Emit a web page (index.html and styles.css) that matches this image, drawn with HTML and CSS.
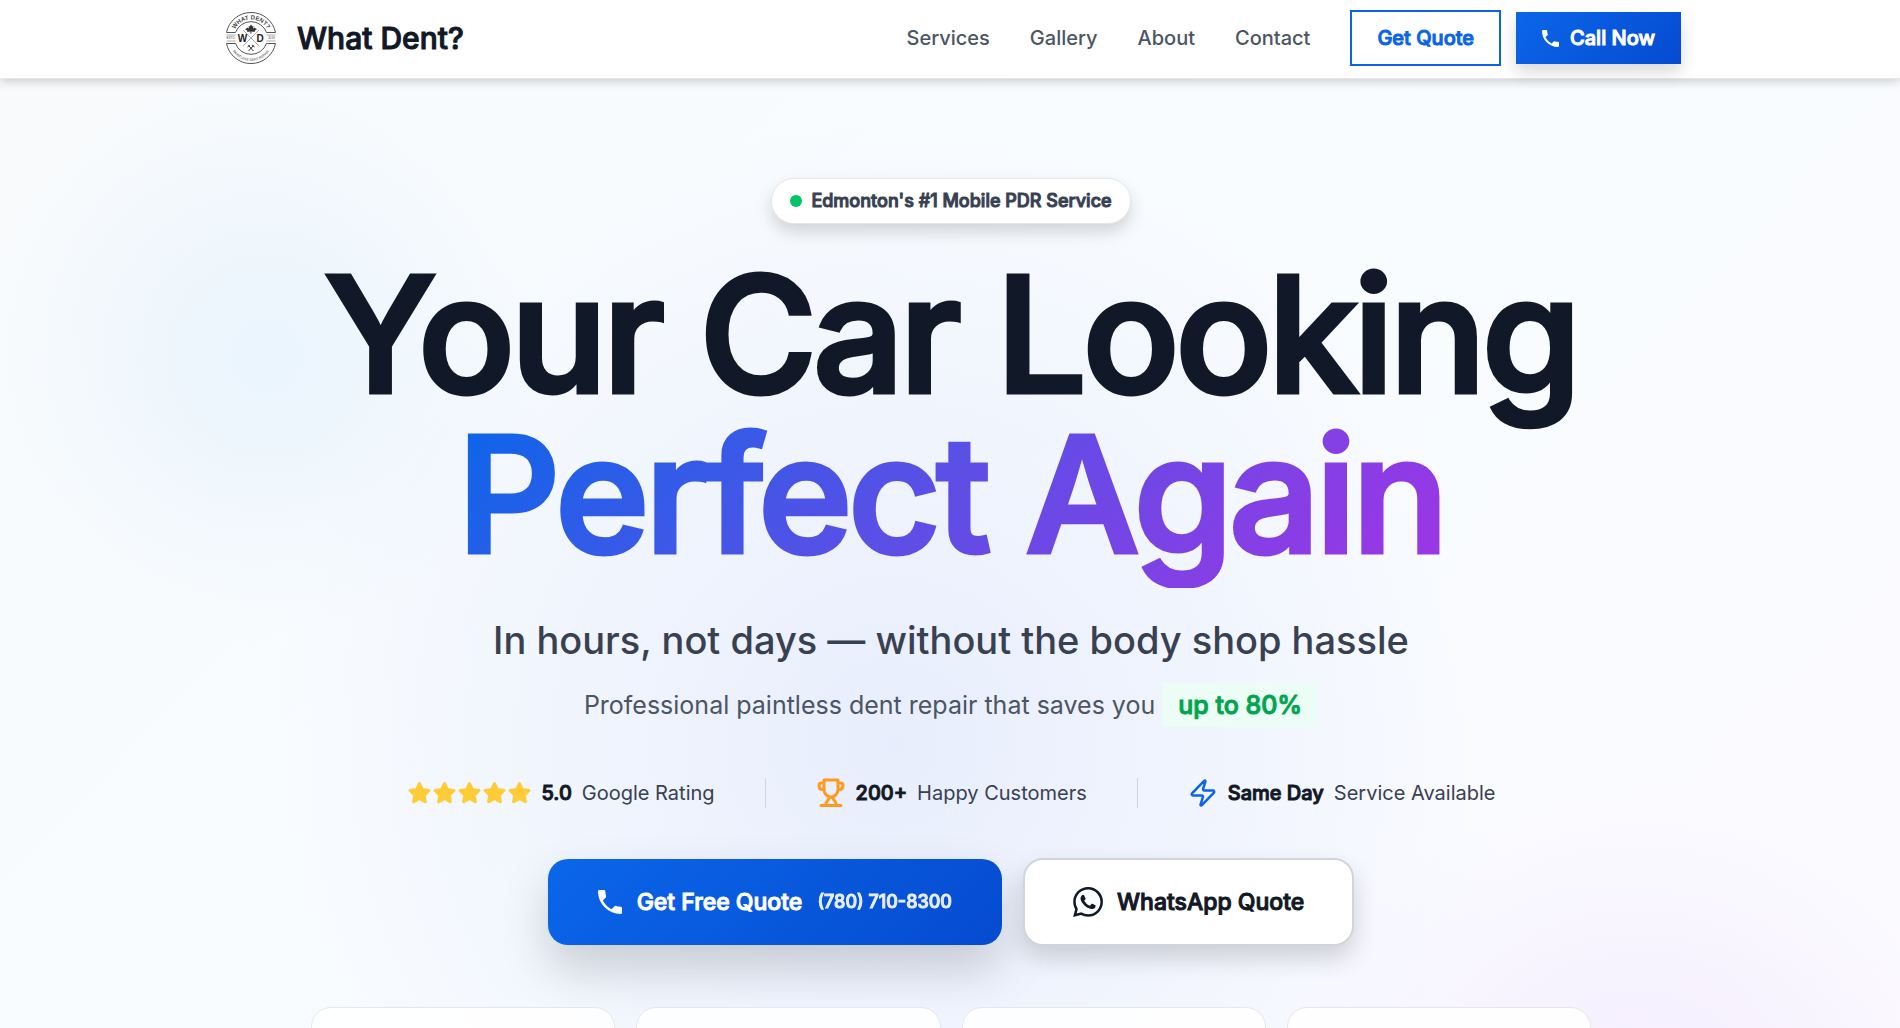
FILE: index.html
```html
<!DOCTYPE html>
<html lang="en">
  <head>
    <meta charset="UTF-8" />
    <meta name="viewport" content="width=device-width, initial-scale=1.0" />
    <title>What Dent? | Mobile PDR Edmonton</title>
    <link rel="stylesheet" href="styles.css">
  </head>
  <body>
    <header class="header">
      <div class="header-inner">
        <a href="#" class="brand">
          <svg class="logo" viewBox="0 0 104 104" aria-hidden="true">
            <defs>
              <path id="arcTop" d="M15 52a37 37 0 0 1 74 0" />
              <path id="arcBottom" d="M8 54a44 44 0 0 0 88 0" />
            </defs>
            <g fill="none" stroke="#555" stroke-width="2">
              <path d="M3 41a50 50 0 0 1 98 0H83a33 33 0 0 0-62 0z" />
              <path d="M3 63a50 50 0 0 0 98 0H83a33 33 0 0 1-62 0z" />
              <path d="M3 46h18M83 46h18M3 58h18M83 58h18" stroke-width="1" />
              <path d="M36 36l32 32M68 36L36 68" stroke-width="1" />
            </g>
            <path fill="#333" d="M52 25l3 4 2-1-1 5 4-2 1 2 3 1-5 4 1 2-7-1v4h-2v-4l-7 1 1-2-5-4 3-1 1-2 4 2-1-5 2 1z" />
            <path fill="none" stroke="#333" stroke-width="2" d="M47 67l10 11M57 67L47 78M45 70l5-4M54 66l5 4" />
            <text class="logo-top"><textPath href="#arcTop" startOffset="50%">WHAT DENT?</textPath></text>
            <text class="logo-bottom"><textPath href="#arcBottom" startOffset="50%">PAINTLESS DENT REPAIR</textPath></text>
            <text class="logo-letter" x="35" y="59">W</text>
            <text class="logo-letter" x="70" y="59">D</text>
            <text class="logo-small" x="12" y="54">ESTD.</text>
            <text class="logo-small" x="93" y="54">2018</text>
          </svg>
          <span class="brand-name">What Dent?</span>
        </a>
        <nav class="nav">
          <a href="#services" class="nav-link">Services</a>
          <a href="#gallery" class="nav-link">Gallery</a>
          <a href="#about" class="nav-link">About</a>
          <a href="#contact" class="nav-link">Contact</a>
          <div class="nav-actions">
            <a href="#quote" class="btn-outline">Get Quote</a>
            <a href="tel:7807108300" class="btn-call">
              <svg class="icon-phone" viewBox="3 3 18 18" aria-hidden="true"><path d="M20 15.5c-1.25 0-2.45-.2-3.57-.57a1 1 0 0 0-1.02.24l-2.2 2.2a15.05 15.05 0 0 1-6.59-6.58l2.2-2.21a1 1 0 0 0 .25-1.02A11.4 11.4 0 0 1 8.5 4a1 1 0 0 0-1-1H4a1 1 0 0 0-1 1 17 17 0 0 0 17 17 1 1 0 0 0 1-1v-3.500a1 1 0 0 0-1-1z" /></svg>
              Call Now
            </a>
          </div>
        </nav>
      </div>
    </header>

    <main class="hero">
      <div class="badge"><span class="badge-dot"></span>Edmonton's #1 Mobile PDR Service</div>

      <h1 class="title">Your Car Looking <span class="title-accent">Perfect Again</span></h1>

      <p class="lead">In hours, not days — without the body shop hassle</p>
      <p class="sublead">Professional paintless dent repair that saves you <span class="save">up to 80%</span></p>

      <div class="stats">
        <div class="stat">
          <div class="stars">
            <svg viewBox="0 0 24 24" aria-hidden="true"><path id="star" d="M12 2.500l2.700 5.800 6.300.8-4.600 4.400 1.200 6.300L12 16.700l-5.600 3.100 1.200-6.300L3 9.100l6.300-.8z" /></svg>
            <svg viewBox="0 0 24 24" aria-hidden="true"><use href="#star" /></svg>
            <svg viewBox="0 0 24 24" aria-hidden="true"><use href="#star" /></svg>
            <svg viewBox="0 0 24 24" aria-hidden="true"><use href="#star" /></svg>
            <svg viewBox="0 0 24 24" aria-hidden="true"><use href="#star" /></svg>
          </div>
          <strong>5.0</strong>
          <span>Google Rating</span>
        </div>
        <div class="divider"></div>
        <div class="stat">
          <svg class="stat-icon trophy" viewBox="0 0 30 30" aria-hidden="true">
            <path d="M8 2h14v9a7 8 0 0 1-14 0zM8 5H5.500C3.500 5 3 6 3 7.500c0 2.500 1.500 4 3.500 4H8M22 5h2.500C26.500 5 27 6 27 7.500c0 2.500-1.500 4-3.500 4H22M13.500 19C13.500 22 9.500 23 9.500 27M16.500 19C16.500 22 20.500 23 20.500 27M5 27.500h20" />
          </svg>
          <strong>200+</strong>
          <span>Happy Customers</span>
        </div>
        <div class="divider"></div>
        <div class="stat">
          <svg class="stat-icon bolt" viewBox="0 0 24 24" aria-hidden="true">
            <path d="M4 14a1 1 0 0 1-.78-1.630l9.900-10.200a.5.5 0 0 1 .860.460l-1.920 6.020A1 1 0 0 0 13 10h7a1 1 0 0 1 .780 1.630l-9.900 10.200a.5.5 0 0 1-.860-.460l1.920-6.020A1 1 0 0 0 11 14z" />
          </svg>
          <strong>Same Day</strong>
          <span>Service Available</span>
        </div>
      </div>

      <div class="cta">
        <a href="tel:7807108300" class="cta-primary">
          <svg class="icon-phone" viewBox="3 3 18 18" aria-hidden="true"><path d="M20 15.5c-1.25 0-2.45-.2-3.57-.57a1 1 0 0 0-1.02.24l-2.2 2.2a15.05 15.05 0 0 1-6.59-6.58l2.2-2.21a1 1 0 0 0 .25-1.02A11.4 11.4 0 0 1 8.5 4a1 1 0 0 0-1-1H4a1 1 0 0 0-1 1 17 17 0 0 0 17 17 1 1 0 0 0 1-1v-3.500a1 1 0 0 0-1-1z" /></svg>
          <span>Get Free Quote</span>
          <span class="cta-number">(780) 710-8300</span>
        </a>
        <a href="#whatsapp" class="cta-secondary">
          <svg class="icon-whatsapp" viewBox="0 0 24 24" aria-hidden="true"><path d="M17.472 14.382c-.297-.149-1.758-.867-2.030-.967-.273-.099-.471-.148-.670.150-.197.297-.767.966-.940 1.164-.173.199-.347.223-.644.075-.297-.150-1.255-.463-2.390-1.475-.883-.788-1.480-1.761-1.653-2.059-.173-.297-.018-.458.130-.606.134-.133.298-.347.446-.520.149-.174.198-.298.298-.497.099-.198.050-.371-.025-.520-.075-.149-.669-1.612-.916-2.207-.242-.579-.487-.500-.669-.510-.173-.008-.371-.010-.570-.010-.198 0-.520.074-.792.372-.272.297-1.040 1.016-1.040 2.479 0 1.462 1.065 2.875 1.213 3.074.149.198 2.096 3.200 5.077 4.487.709.306 1.262.489 1.694.625.712.227 1.360.195 1.871.118.571-.085 1.758-.719 2.006-1.413.248-.694.248-1.289.173-1.413-.074-.124-.272-.198-.570-.347m-5.421 7.403h-.004a9.870 9.870 0 0 1-5.031-1.378l-.361-.214-3.741.982.998-3.648-.235-.374a9.860 9.860 0 0 1-1.510-5.260c.001-5.450 4.436-9.884 9.888-9.884 2.640 0 5.122 1.030 6.988 2.898a9.825 9.825 0 0 1 2.893 6.994c-.003 5.450-4.437 9.884-9.885 9.884m8.413-18.297A11.815 11.815 0 0 0 12.050 0C5.495 0 .160 5.335.157 11.892c0 2.096.547 4.142 1.588 5.945L.057 24l6.305-1.654a11.882 11.882 0 0 0 5.683 1.448h.005c6.554 0 11.890-5.335 11.893-11.893a11.821 11.821 0 0 0-3.480-8.413z" /></svg>
          WhatsApp Quote
        </a>
      </div>

      <div class="cards">
        <div class="card"></div>
        <div class="card"></div>
        <div class="card"></div>
        <div class="card"></div>
      </div>
    </main>
  </body>
</html>
```

FILE: styles.css
```css
* {
  box-sizing: border-box;
}

body {
  margin: 0;
  font-family: Inter, "Liberation Sans", sans-serif;
  font-size: 20px;
  color: #111827;
  height: 100vh;
  overflow: hidden;
}

a {
  color: inherit;
  text-decoration: none;
}

/* heavier medium weight for buttons and highlights */
.brand-name,
.btn-outline,
.btn-call,
.badge,
.save,
.stat strong,
.cta-primary,
.cta-secondary {
  font-weight: 500;
  -webkit-text-stroke: 1px currentColor;
}

/* header */
.header {
  position: relative;
  background: #fff;
  border-bottom: 1px solid #e5e7eb;
  box-shadow: 0 2px 10px rgba(0, 0, 0, 0.2);
}

.header-inner {
  max-width: 1462px;
  height: 78px;
  margin: 0 auto;
  padding-bottom: 2px;
  display: flex;
  align-items: center;
  justify-content: space-between;
}

.brand {
  display: flex;
  align-items: center;
  gap: 14px;
}

.logo {
  width: 64px;
  height: 52px;
}

.logo text {
  font-family: "Liberation Sans", sans-serif;
  fill: #444;
  text-anchor: middle;
}

.logo .logo-top {
  font-size: 12px;
  font-weight: bold;
}

.logo .logo-bottom {
  font-size: 7px;
}

.logo .logo-letter {
  font-size: 20px;
  font-weight: bold;
  fill: #222;
}

.logo .logo-small {
  font-size: 6px;
}

.brand-name {
  font-size: 30px;
}

.nav,
.nav-actions {
  display: flex;
  align-items: center;
}

.nav {
  gap: 40px;
}

.nav-link {
  font-weight: 500;
  color: #4b5563;
}

.nav-actions {
  gap: 15px;
}

.btn-outline {
  padding: 14px 25px;
  border: 2px solid #0b63e5;
  color: #0b63e5;
  line-height: 24px;
}

.btn-call {
  display: flex;
  align-items: center;
  gap: 11px;
  padding: 14px 26px;
  background: linear-gradient(135deg, #0b66e9, #054bd0);
  color: #fff;
  line-height: 24px;
  box-shadow: 0 8px 16px rgba(0, 0, 0, 0.15);
}

.icon-phone {
  width: 17px;
  height: 17px;
  fill: currentColor;
}

/* hero */
.hero {
  min-height: calc(100vh - 79px);
  padding: 99px 20px 0 22px;
  display: flex;
  flex-direction: column;
  align-items: center;
  text-align: center;
  background:
    radial-gradient(circle 280px at 14% 25%, rgba(224, 240, 253, 0.6), rgba(224, 240, 253, 0)),
    radial-gradient(circle 620px at 47% 60%, rgba(228, 234, 252, 0.8), rgba(228, 234, 252, 0)),
    radial-gradient(circle 360px at 86% 96%, rgba(242, 232, 254, 0.8), rgba(242, 232, 254, 0)),
    linear-gradient(135deg, #f8fafc, #f8fcff 50%, #fcfaff);
}

.badge {
  display: flex;
  align-items: center;
  gap: 9px;
  padding: 10px 18px;
  border: 1px solid #e5e7eb;
  border-radius: 24px;
  background: #fff;
  color: #374151;
  font-size: 18px;
  line-height: 24px;
  box-shadow: 0 8px 16px rgba(0, 0, 0, 0.15);
}

.badge-dot {
  width: 12px;
  height: 12px;
  border-radius: 50%;
  background: #00c466;
}

.title {
  margin: 30px 0 0;
  font-size: 160px;
  font-weight: 500;
  line-height: 160px;
  letter-spacing: -0.025em;
  -webkit-text-stroke: 5px currentColor;
}

.title-accent {
  display: block;
  width: fit-content;
  margin: 0 auto;
  padding-bottom: 14px;
  color: transparent;
  background: linear-gradient(135deg, #0b66e9, #5850e6 45%, #a034e4);
  background-clip: text;
}

.lead {
  margin: 24px 0 0;
  font-size: 38px;
  font-weight: 500;
  line-height: 56px;
  color: #374151;
}

.sublead {
  margin: 15px 0 0;
  font-size: 25px;
  line-height: 44px;
  color: #4b5563;
}

.save {
  display: inline-block;
  padding: 0 16px;
  background: #ecfdf5;
  color: #00a550;
}

.stats,
.stat,
.stars,
.cta,
.cta-primary,
.cta-secondary {
  display: flex;
  align-items: center;
}

.stats {
  margin-top: 51px;
  gap: 50px;
  line-height: 30px;
  color: #374151;
}

.stat {
  gap: 10px;
}

.stat strong {
  color: #111827;
}

.stars svg {
  width: 25px;
  height: 25px;
  fill: #ffcb37;
  stroke: #ffcb37;
  stroke-width: 3;
  stroke-linejoin: round;
}

.divider {
  width: 1px;
  height: 30px;
  background: #d1d5db;
}

.stat-icon {
  width: 30px;
  height: 30px;
  fill: none;
  stroke-width: 2;
  stroke-linecap: round;
  stroke-linejoin: round;
}

.trophy {
  stroke: #ff9a1f;
  stroke-width: 3;
}

.bolt {
  stroke: #0b63e5;
}

.cta {
  margin-top: 50px;
  gap: 21px;
  font-size: 23px;
  line-height: 32px;
}

.cta-primary {
  gap: 15px;
  padding: 27px 50px;
  border-radius: 20px;
  background: linear-gradient(135deg, #0b66e9, #054bd0);
  color: #fff;
  box-shadow: 0 24px 48px rgba(0, 0, 0, 0.17);
}

.cta-primary .icon-phone {
  width: 24px;
  height: 24px;
}

.cta-number {
  font-size: 18px;
  opacity: 0.9;
}

.cta-secondary {
  gap: 14px;
  padding: 26px 48px;
  border: 2px solid #d1d5db;
  border-radius: 20px;
  background: #fff;
  box-shadow: 0 12px 24px rgba(0, 0, 0, 0.16);
}

.icon-whatsapp {
  width: 30px;
  height: 30px;
  fill: currentColor;
}

.cards {
  width: 100%;
  max-width: 1280px;
  margin-top: 61px;
  display: grid;
  grid-template-columns: repeat(4, 1fr);
  gap: 21px;
}

.card {
  height: 180px;
  border: 1px solid #e5e7eb;
  border-radius: 20px;
  background: rgba(255, 255, 255, 0.85);
}
```
